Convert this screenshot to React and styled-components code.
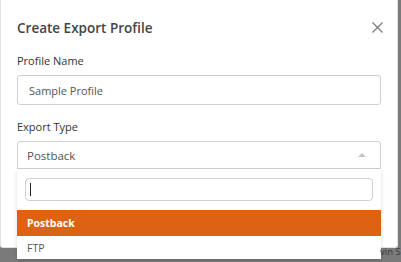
import React from "react"
import styled, { createGlobalStyle } from "styled-components"

const GlobalStyle = createGlobalStyle`
  html, body {
    margin: 0;
    padding: 0;
    background: #7a7a7a;
    font-family: "Open Sans", "Liberation Sans", sans-serif;
    overflow: hidden;
  }
`

const App = () => {
  return (
    <Page>
      <GlobalStyle />
      <Modal>
        <Header>
          <Title>Create Export Profile</Title>
          <CloseButton aria-label="close">
            <svg width="11" height="11" viewBox="0 0 11 11">
              <path d="M0.5 0.5 L10.5 10.5 M10.5 0.5 L0.5 10.5" stroke="#7a7a7a" strokeWidth="1.2" fill="none" />
            </svg>
          </CloseButton>
        </Header>
        <Field>
          <Label>Profile Name</Label>
          <TextInput defaultValue="Sample Profile" />
        </Field>
        <Field>
          <Label>Export Type</Label>
          <SelectWrap>
            <SelectBox>
              <span>Postback</span>
              <Arrow />
            </SelectBox>
            <Menu>
              <SearchRow>
                <Search>
                  <Caret />
                </Search>
              </SearchRow>
              <Option active>Postback</Option>
              <Option>FTP</Option>
            </Menu>
          </SelectWrap>
        </Field>
      </Modal>
      <Behind>vin S</Behind>
    </Page>
  )
}

const Page = styled.div`
  width: 401px;
  height: 262px;
  position: relative;
  background: #7a7a7a;
`
const Modal = styled.div`
  width: 398px;
  height: 248px;
  background: #fff;
  border: 1px solid #e2e2e2;
  border-top: none;
  border-radius: 0 0 3px 3px;
  padding: 0 16px;
  box-sizing: border-box;
`
const Header = styled.div`
  display: flex;
  align-items: center;
  justify-content: space-between;
  height: 54px;
  padding-top: 1px;
  box-sizing: border-box;
`
const Title = styled.h2`
  margin: 0;
  font-size: 13.5px;
  font-weight: 600;
  color: #454545;
`
const CloseButton = styled.button`
  border: none;
  background: none;
  padding: 0;
  margin-right: -2px;
  display: flex;
`
const Field = styled.div`
  display: flex;
  flex-direction: column;
  margin-bottom: 15px;
`
const Label = styled.label`
  font-size: 11px;
  color: #333;
  margin-bottom: 7px;
  line-height: 14px;
`
const TextInput = styled.input`
  height: 30px;
  box-sizing: border-box;
  border: 1px solid #cfcfcf;
  border-radius: 3px;
  padding: 0 11px;
  font-family: inherit;
  font-size: 11px;
  color: #555;
  outline: none;
`
const SelectWrap = styled.div`
  position: relative;
`
const SelectBox = styled.div`
  height: 28px;
  box-sizing: border-box;
  border: 1px solid #cfcfcf;
  border-radius: 3px 3px 0 0;
  padding: 0 9px;
  display: flex;
  align-items: center;
  justify-content: space-between;
  font-size: 11.5px;
  color: #555;
`
const Arrow = styled.span`
  width: 0;
  height: 0;
  border-left: 4px solid transparent;
  border-right: 4px solid transparent;
  border-bottom: 4px solid #c4c4c4;
  margin-right: 5px;
`
const Menu = styled.div`
  position: absolute;
  left: 0;
  right: 0;
  top: 28px;
  background: #fff;
  border-radius: 0 0 3px 3px;
  box-shadow: 0 2px 4px rgba(0, 0, 0, 0.15);
  padding-top: 9px;
`
const SearchRow = styled.div`
  padding: 0 8px 9px;
`
const Search = styled.div`
  height: 23px;
  box-sizing: border-box;
  border: 1px solid #cfcfcf;
  border-radius: 4px;
  display: flex;
  align-items: center;
  padding-left: 4px;
`
const Caret = styled.span`
  width: 1px;
  height: 13px;
  background: #222;
`
const Option = styled.div`
  height: ${(p) => (p.active ? "26px" : "23px")};
  display: flex;
  align-items: center;
  padding: 0 10px;
  font-size: 10.5px;
  font-weight: ${(p) => (p.active ? 700 : 400)};
  color: ${(p) => (p.active ? "#fff" : "#555")};
  background: ${(p) => (p.active ? "#dd6214" : "#fff")};
`
const Behind = styled.div`
  position: absolute;
  left: 380px;
  top: 245px;
  font-size: 9.5px;
  color: #3a3a3a;
  white-space: nowrap;
`

export default App
